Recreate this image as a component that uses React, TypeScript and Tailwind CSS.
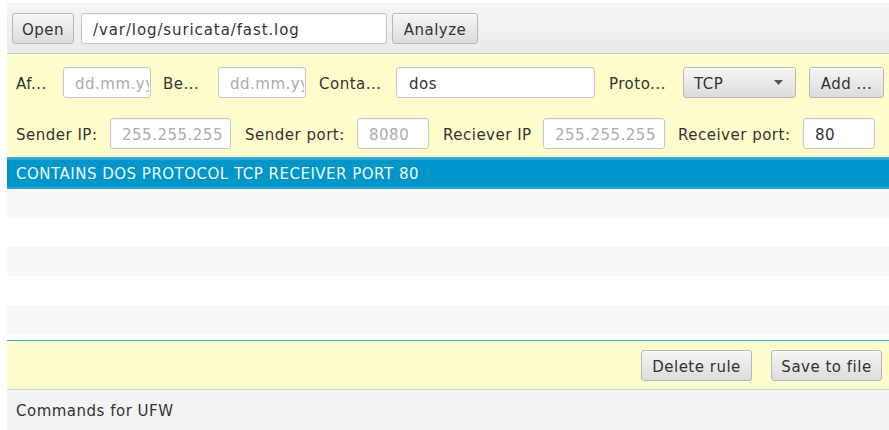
import React from "react";

const font = { fontFamily: '"DejaVu Sans", Verdana, sans-serif' };

function Button({ label, className = "" }: { label: string; className?: string }) {
  return (
    <button
      type="button"
      className={`flex h-[31px] shrink-0 items-center justify-center rounded-[3px] border border-[#b8b8b8] bg-linear-to-b from-[#f6f6f6] to-[#dcdcdc] pt-[3px] text-[15px] tracking-[0.5px] text-[#333] shadow-[inset_0_1px_0_rgba(255,255,255,0.8)] ${className}`}
    >
      {label}
    </button>
  );
}

function Field({
  value,
  placeholder,
  className = "",
}: {
  value?: string;
  placeholder?: string;
  className?: string;
}) {
  return (
    <input
      readOnly
      value={value ?? ""}
      placeholder={placeholder}
      className={`h-[31px] shrink-0 rounded-[3px] border border-[#c6c6c6] bg-white pl-[11px] pr-[1px] pt-[2px] text-[15px] tracking-[0.5px] text-[#333] shadow-[inset_0_1px_1px_rgba(0,0,0,0.05)] outline-none placeholder:text-[#ababab] ${className}`}
    />
  );
}

function Label({ text, className = "" }: { text: string; className?: string }) {
  return (
    <div className={`shrink-0 whitespace-nowrap pt-[3px] text-[15px] tracking-[0.5px] text-[#333] ${className}`}>
      {text}
    </div>
  );
}

const rules = ["CONTAINS DOS PROTOCOL TCP RECEIVER PORT 80"];

export default function App() {
  const rows = Array.from({ length: 6 }, (_, i) => rules[i] ?? "");

  return (
    <div className="h-[430px] w-[889px] overflow-hidden bg-white pl-[7px] pt-[3px]" style={font}>
      <div className="flex h-full flex-col">
        {/* file toolbar */}
        <div className="flex h-[51px] shrink-0 items-center border-b border-[#cdcdcd] bg-linear-to-b from-[#f5f5f5] to-[#ebebeb] pl-[5px] pt-[1px]">
          <Button label="Open" className="w-[62px]" />
          <Field value="/var/log/suricata/fast.log" className="ml-[7px] h-[30px] w-[306px] pl-[8px] tracking-[0.9px]" />
          <Button label="Analyze" className="ml-[5px] w-[86px]" />
        </div>

        {/* filter rows */}
        <div className="flex shrink-0 flex-col gap-[20px] bg-[#fffdcb] pb-[8px] pt-[13px]">
          <div className="flex items-center pl-[9px]">
            <Label text="Af..." className="w-[47px]" />
            <Field placeholder="dd.mm.yyyy" className="w-[88px]" />
            <Label text="Be..." className="ml-[12px] w-[55px]" />
            <Field placeholder="dd.mm.yyyy" className="w-[88px]" />
            <Label text="Conta..." className="ml-[13px] w-[77px]" />
            <Field value="dos" className="w-[199px] pl-[12px]" />
            <Label text="Proto..." className="ml-[14px] w-[74px]" />
            <div className="flex h-[31px] w-[113px] shrink-0 items-center justify-between rounded-[3px] border border-[#b8b8b8] bg-linear-to-b from-[#f6f6f6] to-[#dcdcdc] pl-[10px] pr-[12px] text-[15px] tracking-[0.5px] text-[#333] shadow-[inset_0_1px_0_rgba(255,255,255,0.8)]">
              <span className="pt-[3px]">TCP</span>
              <svg width="9" height="5" viewBox="0 0 9 5">
                <path d="M0 0H9L4.5 5Z" fill="#555" />
              </svg>
            </div>
            <Button label="Add ..." className="ml-[13px] w-[75px]" />
          </div>
          <div className="flex items-center pl-[9px]">
            <Label text="Sender IP:" className="w-[94px]" />
            <Field placeholder="255.255.255" className="h-[30px] w-[121px]" />
            <Label text="Sender port:" className="ml-[14px] w-[112px]" />
            <Field placeholder="8080" className="h-[30px] w-[72px]" />
            <Label text="Reciever IP" className="ml-[14px] w-[100px]" />
            <Field placeholder="255.255.255" className="h-[30px] w-[122px]" />
            <Label text="Receiver port:" className="ml-[13px] w-[125px]" />
            <Field value="80" className="h-[30px] w-[72px] pl-[10px]" />
          </div>
        </div>

        {/* rule list */}
        <div className="flex h-[184px] shrink-0 flex-col overflow-hidden border-y border-[#3fb0dc] bg-white">
          {rows.map((rule, i) =>
            i === 0 ? (
              <div
                key={i}
                className="flex h-[31px] shrink-0 items-center bg-[#0096c9] pl-[9px] pt-[2px] text-[15px] tracking-[0.5px] text-[#f2f6f8] shadow-[inset_0_2px_0_#2aa6d6,inset_0_-2px_0_#2aa6d6]"
              >
                {rule}
              </div>
            ) : (
              <div
                key={i}
                className={`h-[29px] shrink-0 ${i % 2 === 1 ? "bg-[#f8f8f8]" : "bg-white"}`}
              />
            )
          )}
        </div>

        {/* list actions */}
        <div className="flex h-[49px] shrink-0 items-center justify-end gap-[19px] border-b border-[#d6d6d6] bg-[#fffdcb] pr-[7px] pt-[1px]">
          <Button label="Delete rule" className="w-[111px]" />
          <Button label="Save to file" className="w-[111px]" />
        </div>

        <div className="flex flex-1 items-center bg-[#f3f3f3] pl-[9px] pt-[2px] text-[15px] tracking-[0.5px] text-[#333]">
          Commands for UFW
        </div>
      </div>
    </div>
  );
}
